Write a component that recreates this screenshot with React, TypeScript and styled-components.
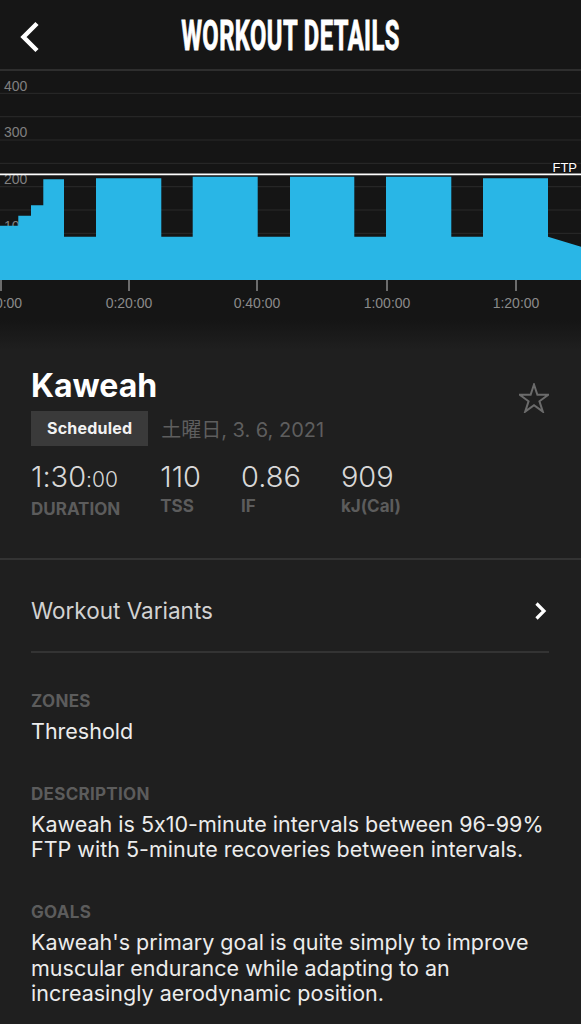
import React from "react";
import styled, { createGlobalStyle } from "styled-components";

const GlobalStyle = createGlobalStyle`
  html, body { margin: 0; padding: 0; background: #1f1f1f; }
  body {
    font-family: Inter, "Noto Sans", sans-serif;
    font-feature-settings: "calt" 0;
    -webkit-font-smoothing: antialiased;
  }
  * { box-sizing: border-box; }
`;

const Page = styled.div`
  width: 581px;
  min-height: 1024px;
  background: #1f1f1f;
  color: #ffffff;
  overflow: hidden;
`;

const Header = styled.header`
  height: 71px;
  background: #161616;
  border-bottom: 2px solid #2e2e2e;
  display: grid;
  grid-template-columns: 1fr auto 1fr;
  align-items: start;
`;

const BackButton = styled.button`
  justify-self: start;
  margin: 20.7px 0 0 18px;
  padding: 0;
  border: 0;
  background: none;
  display: flex;
  cursor: pointer;
`;

const Title = styled.h1`
  margin: 15.3px 0 0;
  font-family: Roboto, "Liberation Sans", sans-serif;
  font-weight: 700;
  font-size: 42px;
  line-height: 42px;
  color: #ffffff;
  letter-spacing: 0.8px;
  transform: scaleX(0.565);
  -webkit-text-stroke: 0.9px #ffffff;
  white-space: nowrap;
`;

const ChartArea = styled.section`
  height: 249px;
  background: #151515;
  svg { display: block; }
`;

const InfoSection = styled.section`
  background: linear-gradient(to bottom, #151515 0px, #1f1f1f 30px, #1f1f1f 100%);
  padding: 46.6px 32px 39px 31px;
  border-bottom: 2px solid #333333;
  display: flex;
  justify-content: space-between;
  align-items: flex-start;
`;

const InfoMain = styled.div`
  display: flex;
  flex-direction: column;
`;

const WorkoutName = styled.h2`
  margin: 0;
  font-size: 32px;
  line-height: 38px;
  font-weight: 700;
  color: #ffffff;
`;

const MetaRow = styled.div`
  margin-top: 6.4px;
  display: flex;
  align-items: center;
`;

const Badge = styled.span`
  height: 35px;
  padding: 0 16px;
  display: flex;
  align-items: center;
  background: #3a3a3a;
  color: #f2f2f2;
  font-size: 16px;
  font-weight: 700;
  letter-spacing: 0.2px;
`;

const DateText = styled.span`
  margin-left: 13px;
  font-family: Inter, "Noto Sans CJK JP", sans-serif;
  font-size: 20px;
  color: #5e5e5e;
`;

const Stats = styled.div`
  margin-top: 15.5px;
  display: flex;
  gap: 40px;
`;

const Stat = styled.div`
  display: flex;
  flex-direction: column;
`;

const StatValue = styled.span`
  font-size: 29px;
  line-height: 32px;
  font-weight: 300;
  color: #d8d8d8;
  white-space: nowrap;
`;

const StatSmall = styled.span`
  font-size: 21px;
`;

const StatLabel = styled.span`
  margin-top: 2.7px;
  font-size: 17px;
  line-height: 20px;
  font-weight: 700;
  color: #5c5c5c;
  white-space: nowrap;
`;

const StarButton = styled.button`
  margin-top: 16.4px;
  padding: 0;
  border: 0;
  background: none;
  display: flex;
`;

const VariantsRow = styled.div`
  margin: 0 32px 0 31px;
  padding: 36.5px 2px 26.5px 0;
  border-bottom: 2px solid #333333;
  display: flex;
  align-items: center;
  justify-content: space-between;
`;

const VariantsText = styled.span`
  font-size: 22.5px;
  line-height: 28px;
  color: #d2d2d2;
`;

const Details = styled.section`
  padding: 37.5px 20px 0 31px;
  display: flex;
  flex-direction: column;
  gap: 39.5px;
`;

const Field = styled.div`
  display: flex;
  flex-direction: column;
`;

const FieldLabel = styled.span`
  font-size: 17px;
  line-height: 20px;
  font-weight: 700;
  color: #5c5c5c;
  letter-spacing: 0.3px;
  margin-bottom: 8px;
`;

const FieldValue = styled.p`
  margin: 0;
  font-size: 21.5px;
  line-height: 25.5px;
  color: #ececec;
`;

const BLUE = "#29b6e6";

const bluePath = [
  "M0,280 L0,225.7 L18.3,225.7 L18.3,215.7 L31,215.7 L31,205.3 L43.3,205.3 L43.3,179.3 L64,179.3 L64,236.7",
  "L96,236.7 L96,178.3 L161.3,178.3 L161.3,236.7",
  "L192.7,236.7 L192.7,176.7 L257.7,176.7 L257.7,236.7",
  "L290,236.7 L290,176.7 L354.3,176.7 L354.3,236.7",
  "L386,236.7 L386,176.7 L451.3,176.7 L451.3,236.7",
  "L483,236.7 L483,178.3 L548,178.3 L548,236.7 L581,246.7 L581,280 Z",
].join(" ");

const gridYs = [93.3, 116.7, 140, 163.3, 186.7, 210, 233.3, 256.7];
const yLabels = [
  { t: "400", y: 90.7 },
  { t: "300", y: 137.4 },
  { t: "200", y: 184 },
  { t: "100", y: 230.7 },
];
const xTicks = [
  { x: 1, lx: 8.5, t: "0:00" },
  { x: 129, lx: 129, t: "0:20:00" },
  { x: 257, lx: 257, t: "0:40:00" },
  { x: 387, lx: 387, t: "1:00:00" },
  { x: 516, lx: 516, t: "1:20:00" },
];

function WorkoutChart() {
  return (
    <svg width="581" height="249" viewBox="0 71 581 249" fontFamily="'Liberation Sans', Arial, sans-serif">
      {gridYs.map((y) => (
        <line key={y} x1="0" x2="581" y1={y} y2={y} stroke="#2b2b2b" strokeWidth="1" />
      ))}
      {yLabels.map((l) => (
        <text key={l.t} x="4" y={l.y} fontSize="14" fill="#808080">
          {l.t}
        </text>
      ))}
      <path d={bluePath} fill={BLUE} />
      <line x1="0" x2="581" y1="174.3" y2="174.3" stroke="#ffffff" strokeWidth="1.8" />
      <text
        x="577"
        y="171.7"
        fontSize="13"
        fill="#ffffff"
        textAnchor="end"
        stroke="#111111"
        strokeWidth="2"
        paintOrder="stroke"
      >
        FTP
      </text>
      {xTicks.map((t) => (
        <g key={t.t}>
          <line x1={t.x} x2={t.x} y1="280" y2="291" stroke="#8a8a8a" strokeWidth="1.5" />
          <text x={t.lx} y="308" fontSize="14" fill="#8a8a8a" textAnchor="middle">
            {t.t}
          </text>
        </g>
      ))}
    </svg>
  );
}

function Star() {
  const pts = [
    [15, 1.5],
    [18.37, 11.86],
    [29.27, 11.86],
    [20.45, 18.27],
    [23.82, 28.64],
    [15, 22.23],
    [6.18, 28.64],
    [9.55, 18.27],
    [0.73, 11.86],
    [11.63, 11.86],
  ]
    .map((p) => p.join(","))
    .join(" ");
  return (
    <svg width="30" height="30" viewBox="0 0 30 30">
      <polygon points={pts} fill="none" stroke="#6b6b6b" strokeWidth="2" strokeLinejoin="miter" />
    </svg>
  );
}

export default function App() {
  return (
    <Page>
      <GlobalStyle />
      <Header>
        <BackButton aria-label="Back">
          <svg width="22" height="32" viewBox="0 0 22 32">
            <path d="M19 2.5 L5.5 16 L19 29.5" fill="none" stroke="#ffffff" strokeWidth="4.5" />
          </svg>
        </BackButton>
        <Title>WORKOUT DETAILS</Title>
        <div />
      </Header>

      <ChartArea>
        <WorkoutChart />
      </ChartArea>

      <InfoSection>
        <InfoMain>
          <WorkoutName>Kaweah</WorkoutName>
          <MetaRow>
            <Badge>Scheduled</Badge>
            <DateText>土曜日, 3. 6, 2021</DateText>
          </MetaRow>
          <Stats>
            <Stat>
              <StatValue>
                1:30<StatSmall>:00</StatSmall>
              </StatValue>
              <StatLabel>DURATION</StatLabel>
            </Stat>
            <Stat>
              <StatValue>110</StatValue>
              <StatLabel>TSS</StatLabel>
            </Stat>
            <Stat>
              <StatValue>0.86</StatValue>
              <StatLabel>IF</StatLabel>
            </Stat>
            <Stat>
              <StatValue>909</StatValue>
              <StatLabel>kJ(Cal)</StatLabel>
            </Stat>
          </Stats>
        </InfoMain>
        <StarButton aria-label="Favorite">
          <Star />
        </StarButton>
      </InfoSection>

      <VariantsRow>
        <VariantsText>Workout Variants</VariantsText>
        <svg width="14" height="20" viewBox="0 0 14 20">
          <path d="M3.5 2.5 L11 10 L3.5 17.5" fill="none" stroke="#ffffff" strokeWidth="3.2" />
        </svg>
      </VariantsRow>

      <Details>
        <Field>
          <FieldLabel>ZONES</FieldLabel>
          <FieldValue>Threshold</FieldValue>
        </Field>
        <Field>
          <FieldLabel>DESCRIPTION</FieldLabel>
          <FieldValue>
            Kaweah is 5x10-minute intervals between 96-99% FTP with 5-minute recoveries between intervals.
          </FieldValue>
        </Field>
        <Field>
          <FieldLabel>GOALS</FieldLabel>
          <FieldValue>
            Kaweah's primary goal is quite simply to improve muscular endurance while adapting to an increasingly
            aerodynamic position.
          </FieldValue>
        </Field>
      </Details>
    </Page>
  );
}
